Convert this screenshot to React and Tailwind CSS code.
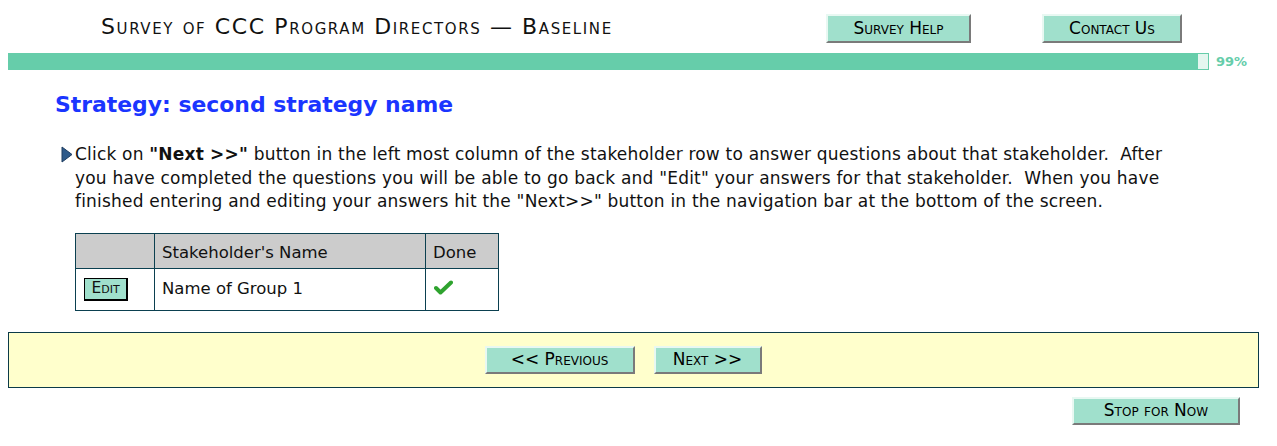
import React from "react";

const btn =
  "bg-[#a0e0cc] text-black border-2 border-t-[#e8f8f2] border-l-[#e8f8f2] border-b-[#7a7a7a] border-r-[#7a7a7a] [font-variant:small-caps] font-['DejaVu_Sans',sans-serif] text-[17px] leading-none flex items-center justify-center";

export default function App() {
  return (
    <div className="w-[1277px] h-[446px] bg-white font-['DejaVu_Sans',Verdana,sans-serif] text-black overflow-hidden">
      {/* header */}
      <div className="flex items-start h-[53px]">
        <div className="pl-[101px] pt-[13px] w-[826px] text-[22px] leading-[28px] tracking-[1.6px] [font-variant:small-caps] font-['DejaVu_Sans',sans-serif] text-[#111]">
          Survey of CCC Program Directors — Baseline
        </div>
        <div className={btn + " mt-[14px] w-[145px] h-[29px]"}>Survey Help</div>
        <div className={btn + " mt-[14px] ml-[71px] w-[140px] h-[29px]"}>Contact Us</div>
      </div>
      {/* progress */}
      <div className="flex items-center h-[17px]">
        <div className="ml-[8px] w-[1201px] h-[17px] bg-[#66cdaa] flex justify-end">
          <div className="w-[12px] h-[17px] bg-[#e4f6ef] border border-[#66cdaa]" />
        </div>
        <div className="ml-[7px] text-[13px] font-bold text-[#66cdaa] leading-none">99%</div>
      </div>
      {/* heading */}
      <div className="pl-[55px] pt-[22px] text-[21.9px] leading-[26px] font-bold text-[#1a35ff]">
        Strategy: second strategy name
      </div>
      {/* paragraph */}
      <div className="flex pl-[61px] pt-[25px]">
        <svg width="13" height="17" viewBox="0 0 13 17" className="mt-[3px] shrink-0">
          <path d="M1 1 L11 8.5 L1 16 Z" fill="#2e5a8a" stroke="#1d3c60" strokeWidth="1" />
        </svg>
        <p className="ml-[1px] w-[1094px] text-[17px] tracking-[0.2px] leading-[23.5px] text-[#111]">
          Click on <b>"Next &gt;&gt;"</b> button in the left most column of the stakeholder row to answer questions about that stakeholder.&nbsp; After you have completed the questions you will be able to go back and "Edit" your answers for that stakeholder.&nbsp; When you have finished entering and editing your answers hit the "Next&gt;&gt;" button in the navigation bar at the bottom of the screen.
        </p>
      </div>
      {/* table */}
      <div className="pl-[75px] pt-[19px]">
        <table className="border-collapse text-[16.5px] text-[#111]">
          <tbody>
            <tr className="bg-[#cccccc] h-[35px]">
              <td className="border border-[#0b4050] w-[79px]"></td>
              <td className="border border-[#0b4050] w-[271px] pl-[7px] pt-[5px]">Stakeholder's Name</td>
              <td className="border border-[#0b4050] w-[73px] pl-[7px] pt-[5px]">Done</td>
            </tr>
            <tr className="h-[42px]">
              <td className="border border-[#0b4050] pl-[8px]">
                <div className="w-[44px] h-[23px] border border-black bg-[#a0e0cc] flex items-center justify-center [font-variant:small-caps] font-['DejaVu_Sans',sans-serif] text-[15.5px] leading-none border-r-2 border-b-2">
                  Edit
                </div>
              </td>
              <td className="border border-[#0b4050] pl-[7px]">Name of Group 1</td>
              <td className="border border-[#0b4050] pl-[8px]">
                <svg width="19" height="15" viewBox="0 0 19 15" className="mb-[4px]">
                  <path d="M2 8 L6.5 12.5 L17 2.5" fill="none" stroke="#2fa32f" strokeWidth="4" strokeLinecap="round" strokeLinejoin="round" />
                </svg>
              </td>
            </tr>
          </tbody>
        </table>
      </div>
      {/* nav bar */}
      <div className="mx-[8px] mt-[21px] w-[1251px] h-[56px] bg-[#ffffcc] border border-[#0b3a48] flex items-center justify-center gap-[19px]">
        <div className={btn + " w-[150px] h-[28px] ml-[-21px]"}>&lt;&lt; Previous</div>
        <div className={btn + " w-[108px] h-[28px]"}>Next &gt;&gt;</div>
      </div>
      <div className="flex justify-end pr-[37px] pt-[9px]">
        <div className={btn + " w-[168px] h-[28px]"}>Stop for Now</div>
      </div>
    </div>
  );
}
